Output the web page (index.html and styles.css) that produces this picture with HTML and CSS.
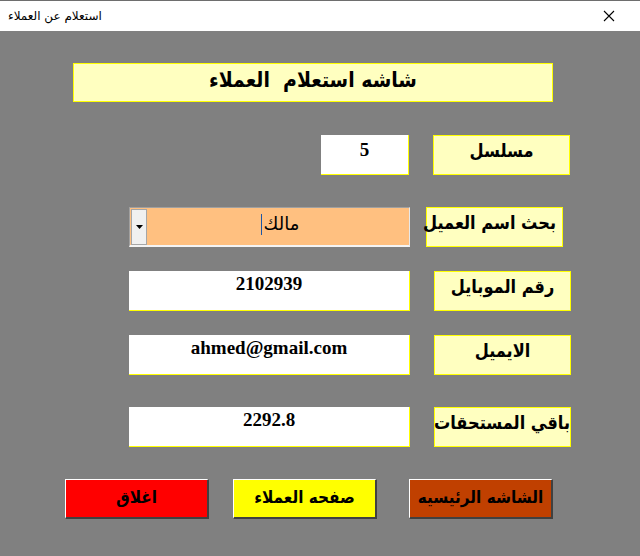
FILE: index.html
```html
<!DOCTYPE html>
<html lang="ar">
<head>
<meta charset="utf-8">
<link rel="stylesheet" href="styles.css">
</head>
<body>
<div class="window">
  <div class="titlebar">
    <span class="title">استعلام عن العملاء</span>
    <span class="close"><svg width="12" height="12" viewBox="0 0 12 12"><path d="M1 1L11 11M11 1L1 11" stroke="#000" stroke-width="1.1" fill="none"/></svg></span>
  </div>
  <div class="client">
    <div class="header">شاشه استعلام&nbsp; العملاء</div>

    <div class="row row1">
      <div class="value v-small">5</div>
      <div class="label">مسلسل</div>
    </div>

    <div class="row row2">
      <div class="combo">
        <div class="drop"><svg width="7" height="4" viewBox="0 0 7 4"><path d="M0 0H7L3.5 4Z" fill="#000"/></svg></div>
        <div class="combo-text"><span class="caret"></span><span>مالك</span></div>
      </div>
      <div class="label label-alt">بحث اسم العميل</div>
    </div>

    <div class="row row3">
      <div class="value v-wide">2102939</div>
      <div class="label">رقم الموبايل</div>
    </div>

    <div class="row row4">
      <div class="value v-wide">ahmed@gmail.com</div>
      <div class="label">الايميل</div>
    </div>

    <div class="row row5">
      <div class="value v-wide">2292.8</div>
      <div class="label">باقي المستحقات</div>
    </div>

    <div class="buttons">
      <div class="btn btn-red">اغلاق</div>
      <div class="btn btn-yellow">صفحه العملاء</div>
      <div class="btn btn-brown">الشاشه الرئيسيه</div>
    </div>
  </div>
</div>
</body>
</html>
```

FILE: styles.css
```css
html, body {
  margin: 0;
  padding: 0;
}
body {
  width: 640px;
  height: 556px;
  overflow: hidden;
  background: #808080;
}
.window {
  width: 640px;
  height: 556px;
  display: flex;
  flex-direction: column;
}
.titlebar {
  height: 30px;
  border-top: 1px solid #6e6e6e;
  background: #ffffff;
  display: flex;
  align-items: center;
  justify-content: space-between;
  padding: 0 25px 0 8px;
  box-sizing: content-box;
}
.title {
  font-family: "DejaVu Sans", sans-serif;
  font-size: 12px;
  color: #000;
  direction: rtl;
}
.close {
  display: flex;
  align-items: center;
}
.client {
  flex: 1;
  background: #808080;
  display: flex;
  flex-direction: column;
}
.header {
  margin: 32px 0 0 73px;
  width: 480px;
  height: 39px;
  box-sizing: border-box;
  background: #ffffc0;
  border: 1px solid #ffff00;
  font-family: "DejaVu Sans Condensed", "DejaVu Sans", sans-serif;
  font-stretch: condensed;
  font-weight: bold;
  font-size: 21px;
  direction: rtl;
  text-align: center;
  line-height: 32px;
  color: #000;
}
.row {
  display: flex;
  align-items: flex-start;
}
.row1 { margin-top: 33px; padding-left: 321px; }
.row2 { margin-top: 32px; padding-left: 129px; }
.row3 { margin-top: 24px; padding-left: 129px; }
.row4 { margin-top: 24px; padding-left: 129px; }
.row5 { margin-top: 32px; padding-left: 129px; }

.value {
  height: 40px;
  box-sizing: border-box;
  background: #ffffff;
  border-right: 1px solid #ffff00;
  border-bottom: 1px solid #ffff00;
  font-family: "Liberation Serif", serif;
  font-weight: bold;
  font-size: 19px;
  text-align: center;
  line-height: 19px;
  padding-top: 3px;
  color: #000;
}
.v-small { width: 88px; padding-top: 5px; }
.v-wide { width: 281px; }

.label {
  margin-left: 24px;
  width: 137px;
  height: 40px;
  box-sizing: border-box;
  background: #ffffc0;
  border: 1px solid #ffff00;
  font-family: "DejaVu Sans Condensed", "DejaVu Sans", sans-serif;
  font-stretch: condensed;
  font-weight: bold;
  font-size: 18px;
  direction: rtl;
  text-align: center;
  line-height: 30px;
  white-space: nowrap;
  color: #000;
}
.label-alt {
  margin-left: 16px;
  width: 137px;
  height: 40px;
  text-align: right;
  padding-right: 6px;
}

.combo {
  width: 281px;
  height: 40px;
  box-sizing: border-box;
  display: flex;
  background: #ffc080;
  border-top: 1px solid #a0a0a0;
  border-left: 1px solid #a0a0a0;
  border-right: 1px solid #e8e8e8;
  border-bottom: 2px solid #f4f4f4;
}
.drop {
  width: 16px;
  height: 36px;
  margin: 1px 0 0 1px;
  box-sizing: border-box;
  background: #f0f0f0;
  border: 1px solid #a6a6a6;
  display: flex;
  align-items: center;
  justify-content: center;
}
.combo-text {
  flex: 1;
  display: flex;
  justify-content: center;
  align-items: flex-start;
  padding-top: 4px;
  padding-left: 4px;
  font-family: "DejaVu Sans", sans-serif;
  font-size: 18px;
  line-height: 24px;
  direction: ltr;
  color: #000;
}
.combo-text span:last-child {
  direction: rtl;
}
.caret {
  display: inline-block;
  width: 1px;
  height: 21px;
  margin-top: 2px;
  background: #1a57a8;
  margin-right: 2px;
}

.buttons {
  margin-top: 32px;
  padding-left: 65px;
  display: flex;
  align-items: flex-start;
}
.btn {
  width: 144px;
  height: 40px;
  box-sizing: border-box;
  border-top: 1px solid #ffffff;
  border-left: 1px solid #ffffff;
  border-right: 2px solid #404040;
  border-bottom: 2px solid #404040;
  font-family: "DejaVu Sans Condensed", "DejaVu Sans", sans-serif;
  font-stretch: condensed;
  font-weight: bold;
  font-size: 17px;
  direction: rtl;
  text-align: center;
  line-height: 34px;
  color: #000;
}
.btn-red { background: #ff0000; }
.btn-yellow { background: #ffff00; margin-left: 24px; }
.btn-brown { background: #c04000; margin-left: 32px; }
```
